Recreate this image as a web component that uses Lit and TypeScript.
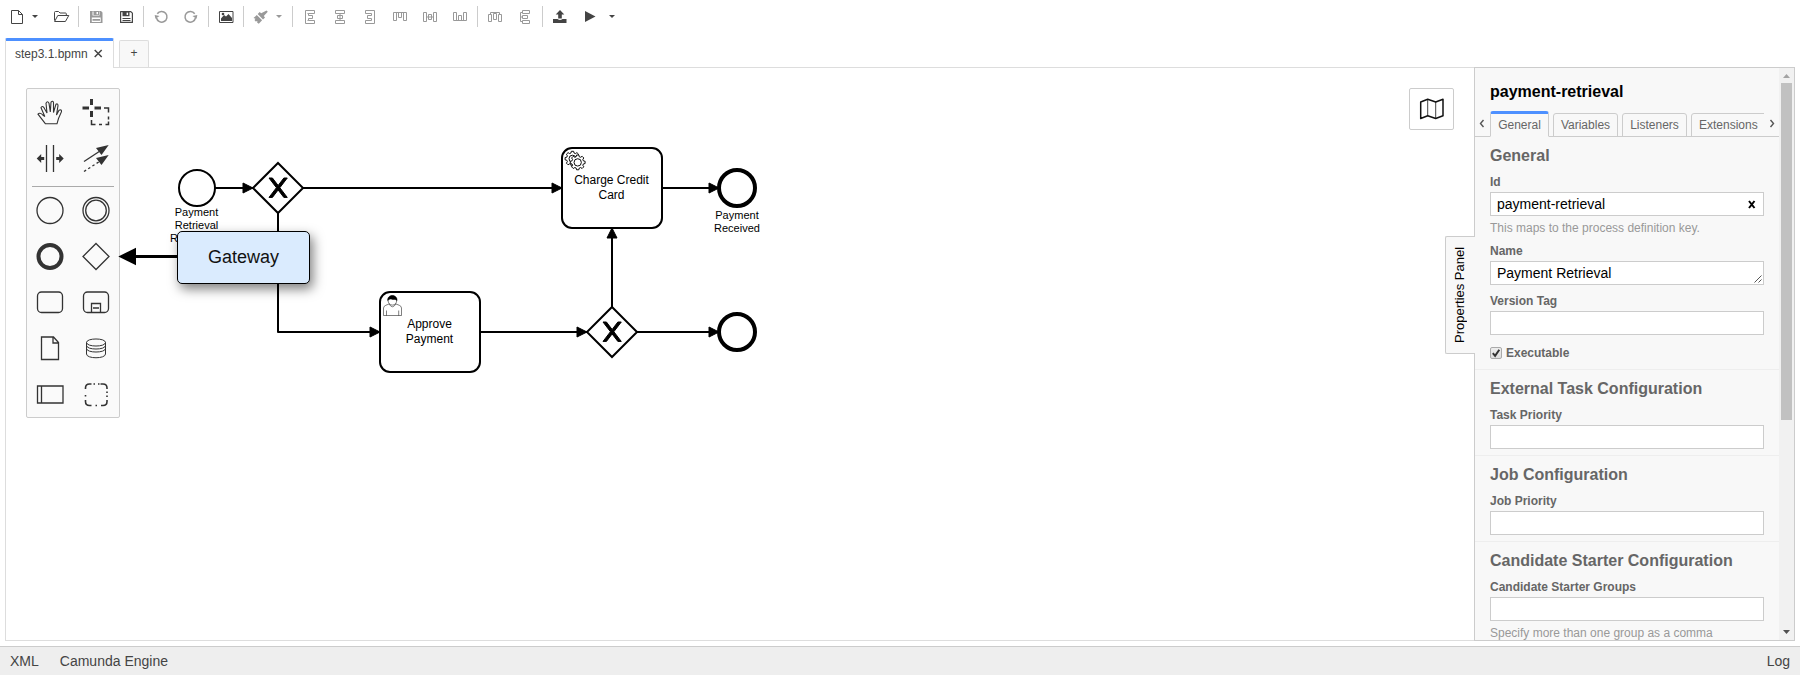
import { LitElement, html, svg, css, nothing } from "lit";
import { customElement, property } from "lit/decorators.js";

const ICONS: Record<string, any> = {
  file: svg`<path d="M9.500 10.500h7l4 4v9h-11z M16.500 10.500v4h4" class="l"/>`,
  open: svg`<path d="M8.500 20.500v-8q0-1 1-1h3l1.500 1.500h5.500q.8 0 .8.800v1.700M8.600 21.500l3.200-6h11l-3.400 6z" class="l"/>`,
  saved: svg`<path class="f" fill-rule="evenodd" d="M9 11h11l1.500 1.500V23H9z M11.500 11.500v4h7v-4z M10.800 17.500V22h8.900v-4.500z"/><path class="f" fill-rule="evenodd" d="M12.500 11h5.500v4h-5.500z M15.500 12v2.300h1.500v-2.300z M11.500 19h7.500v1.800h-7.500z"/>`,
  save: svg`<path class="l" d="M9.600 11.600h10.200l1.600 1.600v9.200H9.600z" style="stroke-width:1.2"/><path class="f" fill-rule="evenodd" d="M11.500 11.500h7v4.700h-7z M15.600 12.500v2.500h1.500v-2.500z M11.500 18h8v1h-8z M11.500 20h8v1h-8z"/>`,
  undo: svg`<path d="M11.300 13.800a5.300 5.300 0 1 1-.8 4.200" class="l w"/><path d="M8.500 15.500h5l-3.500 3.500z" transform="rotate(12 11 16)" class="f"/>`,
  redo: svg`<path d="M18.700 13.800a5.300 5.300 0 1 0 .8 4.200" class="l w"/><path d="M21.500 15.500h-5l3.500 3.500z" transform="rotate(-12 19 16)" class="f"/>`,
  image: svg`<path d="M8.500 11.500h13.500v11h-13.500z" class="l"/><path d="M10 21v-2.500l3-3.500 2 1.500 2.500-2.500 3.500 4v3z" class="f"/><circle cx="12" cy="14" r="1.300" class="f"/>`,
  brush: svg`<path class="f" d="M20.500 10.500l1.300 1.300-4 4.200 1.200 1.400-2 2-5.300-5.300 2-2 1.500 1.200z M10.800 15l5.300 5.300-3.300 3.500-1.700-1.200.3-1.500-1.700.4-1.200-1.500 1-1.200-2-.7z"/>`,
  left: svg`<path class="l" d="M10.500 10.500h9v3h-6v2h4v3h-4v2h6v3h-9z M13.500 13.500h-1M13.500 20.500h-1"/>`,
  center: svg`<path class="l" d="M10.500 10.500h9v3h-9z M10.500 20.500h9v3h-9z M12.500 15.500h5v3h-5z M15 13.500v7"/>`,
  right: svg`<path class="l" d="M19.500 10.500h-9v3h6v2h-4v3h4v2h-6v3h9z"/>`,
  top: svg`<path class="l" d="M8.500 12.500h13v8h-3v-8 M8.500 12.500v8h3v-8 M13.500 12.500v5h3v-5"/>`,
  middle: svg`<path class="l" d="M8.500 12.500h3v9h-3z M18.500 12.500h3v9h-3z M13.500 14.500h3v5h-3z M11.500 17h7"/>`,
  bottom: svg`<path class="l" d="M8.500 20.500h13v-8h-3v8 M8.500 20.500v-8h3v8 M13.500 20.500v-5h3v5"/>`,
  disth: svg`<path class="l" d="M8.500 14.500h3v7h-3z M18.500 14.500h3v7h-3z M13.500 13.500h3v6h-3z M10.500 14.500v-2h9v2"/>`,
  distv: svg`<path class="l" d="M12.500 10.500h7v3h-7z M12.500 20.500h7v3h-7z M12.500 15.500h5v3h-5z M12.500 12.500h-2v9h2 M10.500 17h2"/>`,
  upload: svg`<path class="f" d="M15 10l4.300 4.500h-2.500v4h-3.600v-4h-2.500z M8 19h4.500q2.500 2 5 0H21.500v4H8z"/>`,
  play: svg`<path class="f" d="M10 11l10.500 5.500L10 22z"/>`,
};

/** Toolbar groups; a trailing "-" marks a disabled action, "caret" a small menu arrow. */
const GROUPS = [
  ["file", "caret", "open"],
  ["saved-", "save"],
  ["undo-", "redo-"],
  ["image"],
  ["brush-", "caret-"],
  ["left-", "center-", "right-", "top-", "middle-", "bottom-"],
  ["disth-", "distv-"],
  ["upload", "play", "wide"],
];

@customElement("editor-toolbar")
class EditorToolbar extends LitElement {
  static styles = css`
    :host { display: flex; height: 34px; align-items: flex-start; }
    .group { display: flex; padding: 0 2px; border-right: 1px solid #ccc; height: 21px; margin-top: 6px; }
    .group:last-child { border: none; }
    svg { display: block; margin-top: -6px; color: #444; flex: none; }
    .off { color: #999; }
    .l { fill: none; stroke: currentColor; stroke-width: 1; stroke-linejoin: round; }
    .w { stroke-width: 1.5; }
    .f { fill: currentColor; }
  `;
  render() {
    return html`${GROUPS.map(
      (g) => html`<div class="group">${g.map((raw) => {
        const off = raw.endsWith("-");
        const name = raw.replace("-", "");
        if (name === "caret" || name === "wide")
          return html`<svg class=${off ? "off" : ""} width="14" height="34" viewBox=${name === "wide" ? "-4 0 14 34" : "0 0 14 34"}><path class="f" d="M0 15h6L3 18z"/></svg>`;
        return html`<svg class=${off ? "off" : ""} width="30" height="34" viewBox="0 0 30 34">${ICONS[name]}</svg>`;
      })}</div>`
    )}`;
  }
}

const PALETTE = [
  svg`<path d="M18.500 34.800 L11 25.200Q12.500 23.200 15.500 25.700L17.800 27.500 14 18.700Q15 16.200 17 18.700L20 24 19 14.200Q20.500 11.200 22 14.200L23.300 23 24 13.200Q26 11.200 26.500 13.700V23.500L29 15.200Q31 14.200 31 16.700L29.500 26 32 21.200Q34.800 20.200 34.500 22.700L31.500 29.500 30 34.800z" stroke-width="1.100"/>`,
  svg`<path d="M18.500 10v6M18.500 22v6M9.500 19h6.500M21.500 19h6.500" stroke-width="3"/><path d="M31 19h4.500v4.500M35.500 27.500v3M35.500 32.500v3h-3M29 35.500h-3M22.500 35.500h-4v-4.500" stroke-width="1.500"/>`,
  svg`<path d="M19.500 10v27M26.500 10v27"/><path class="s" d="M9.700 23.500l4.500-4.500v3h3v3h-3v3z M36.700 23.500l-4.500-4.500v3h-3v3h3v3z"/>`,
  svg`<path d="M11 26.500L27 16"/><path d="M11 36.500L28 25.500" stroke-dasharray="2.500 2.500"/><path class="s" d="M35.700 10l-7.200 10-5.500-7z M35.700 20l-7.200 10-5.500-7z"/>`,
  nothing,
  svg`<circle cx="23" cy="23.500" r="13"/>`,
  svg`<circle cx="23" cy="23.500" r="13"/><circle cx="23" cy="23.500" r="10.300"/>`,
  svg`<circle cx="23" cy="23.500" r="11.500" stroke-width="4"/>`,
  svg`<path d="M23 10.500l13 13-13 13-13-13z"/>`,
  svg`<rect x="10.500" y="13" width="25" height="20.500" rx="4"/>`,
  svg`<rect x="10.500" y="13" width="25" height="20.500" rx="4"/><path d="M18.500 33.500V24.500h9v9M20 29h6"/>`,
  svg`<path d="M14.500 12h12l5 5.500V34.500h-17z M26 12v6h5.500"/>`,
  svg`<path class="t" d="M13.500 17.500v11.500c0 5 19 5 19 0V17.500M13.500 17.500c0-4.700 19-4.700 19 0s-19 4.700-19 0M13.500 20.500c0 4.700 19 4.700 19 0M13.500 23.500c0 4.700 19 4.700 19 0"/>`,
  svg`<path d="M10.500 15h25.500v17H10.500z M14.500 15v17"/>`,
  svg`<path stroke-width="1.600" d="M12.500 18v-1q0-4 4-4h2M27.500 13h2.500q4 0 4 4v1M34 29v1.500q0 4-4 4h-2M18.500 34.500h-2q-4 0-4-4v-1.500M20.500 13h1.500M25 13h1.500M34 20.500v1.500M34 24.500v1.500M22.500 34.500h1.500M12.500 24v1.500"/>`,
];

@customElement("shape-palette")
class ShapePalette extends LitElement {
  static styles = css`
    :host { display: grid; grid-template-columns: 46px 46px; box-sizing: border-box; width: 94px;
      background: #fafafa; border: 1px solid #ccc; border-radius: 2px; }
    svg { display: block; fill: none; stroke: #333; stroke-width: 1.3; }
    .s { fill: #333; stroke: none; }
    .t { stroke-width: 1; }
    hr { grid-column: 1 / -1; margin: 5px 5px 0; border: 0; border-top: 1px solid #aaa; }
  `;
  render() {
    return PALETTE.map((p) => (p === nothing ? html`<hr />` : html`<svg width="46" height="46" viewBox="0 0 46 46">${p}</svg>`));
  }
}

const flow = (d: string) => svg`<path class="flow" d=${d} marker-end="url(#end)"/>`;
const lines = (x: number, y: number, step: number, cls: string, rows: string[]) =>
  rows.map((r, i) => svg`<text class=${cls} x=${x} y=${y + i * step}>${r}</text>`);
const gateway = (x: number, y: number) => svg`<g transform="translate(${x} ${y})">
  <path class="gw" d="M0-25L25 0 0 25-25 0z"/>
  <path class="cross" d="m-9-10 7.430 9.710-7.430 9.710h3.430l5.710-7.460 5.710 7.460h3.430l-7.430-9.710 7.430-9.710h-3.430l-5.710 7.460-5.710-7.460z"/></g>`;
const GEAR = "M-1.300-8.500h2.600l.5 2 1.500.6 1.800-1.100 1.900 1.900-1.100 1.800.6 1.500 2 .5v2.600l-2 .5-.6 1.500 1.100 1.800-1.900 1.900-1.800-1.100-1.500.6-.5 2h-2.600l-.5-2-1.500-.6-1.800 1.100-1.900-1.900 1.100-1.800-.6-1.500-2-.5v-2.600l2-.5.6-1.500-1.100-1.800 1.900-1.900 1.800 1.100 1.500-.6z";

@customElement("diagram-canvas")
class DiagramCanvas extends LitElement {
  static styles = css`
    :host { display: block; position: relative; overflow: hidden; background: #fff; }
    .board { display: block; }
    .flow { fill: none; stroke: #000; stroke-width: 2; stroke-linejoin: round; }
    .head { stroke: #000; stroke-width: 1; }
    .cross { stroke: #000; stroke-width: 1; }
    .shape, .gw { fill: #fff; stroke: #000; stroke-width: 2; }
    .end { fill: #fff; stroke: #000; stroke-width: 4; }
    .thin { fill: #fff; stroke: #000; stroke-width: 1.1; }
    .hair { fill: #fff; stroke: #000; stroke-width: 0.5; }
    text { text-anchor: middle; fill: #000; }
    .task { font-size: 12px; }
    .label { font-size: 11px; }
    shape-palette { position: absolute; left: 20px; top: 20px; }
    .map { position: absolute; right: 20px; top: 20px; width: 43px; height: 40px; border: 1px solid #ccc; border-radius: 2px; background: #fff; }
    .pointer { position: absolute; left: 112px; top: 179px; }
    .callout { position: absolute; left: 171px; top: 163px; width: 131px; height: 51px; border: 1px solid #000;
      border-radius: 5px; background: #daebfe; font-size: 18px; line-height: 51px; text-align: center; color: #111;
      box-shadow: 3px 5px 12px rgba(0, 0, 0, 0.5); }
  `;
  render() {
    return html`
      <svg class="board" width="1468" height="572" viewBox="6 68 1468 572">
        <defs><marker id="end" viewBox="0 0 20 20" refX="11" refY="10" markerWidth="10" markerHeight="10" orient="auto"><path class="head" d="M1 5L11 10 1 15z"/></marker></defs>
        ${flow("M215 188H253")}${flow("M303 188H562")}${flow("M662 188H719")}
        ${flow("M278 213V332H380")}${flow("M480 332H587")}${flow("M612 307V228")}${flow("M637 332H719")}
        <circle class="shape" cx="197" cy="188" r="18"/>
        <circle class="end" cx="737" cy="188" r="18"/>
        <circle class="end" cx="737" cy="332" r="18"/>
        ${gateway(278, 188)}${gateway(612, 332)}
        <rect class="shape" x="562" y="148" width="100" height="80" rx="10"/>
        <rect class="shape" x="380" y="292" width="100" height="80" rx="10"/>
        <g transform="translate(572.500 158.700) scale(.87)"><path class="thin" d=${GEAR}/><circle class="thin" r="4"/></g>
        <g transform="translate(577.700 162.400) scale(.87)"><path class="thin" d=${GEAR}/><circle class="thin" r="4.200"/></g>
        <g class="hair">
          <path d="M383.500 315.500v-7.500q.3-2 2.300-2.700l3.700-1.500h6l3.800 1.500q2 .7 2.200 2.700v7.500z"/>
          <path d="M389 303.800q3.300 6 7 0M386.500 315.500v-5M398.700 315.500v-5"/>
          <ellipse cx="392.400" cy="300.500" rx="4.300" ry="4.600"/>
          <path fill="#000" d="M387.700 300.500c-.5-6.700 9.800-6.700 9.300 0-2.300-2-3.500-.5-5-1.200-1.700-.6-2.800 0-4.300 1.200z"/>
        </g>
        ${lines(611.5, 184, 15, "task", ["Charge Credit", "Card"])}
        ${lines(429.5, 328, 15, "task", ["Approve", "Payment"])}
        ${lines(196.5, 216, 13, "label", ["Payment", "Retrieval", "Requested"])}
        ${lines(737, 219, 13, "label", ["Payment", "Received"])}
        <path d="M134 256.500H180" stroke="#000" stroke-width="3"/>
      </svg>
      <shape-palette></shape-palette>
      <svg class="pointer" width="20" height="20"><path d="M.3 9.500L18 .8v17.400z"/></svg>
      <div class="callout">Gateway</div>
      <div class="map"><svg width="43" height="40" fill="none" stroke="#111" stroke-width="1.500" stroke-linejoin="round"><path d="M10.700 13l7-2.700 8 2.700 7.300-2.700v16.500l-7.300 2.700-8-2.700-7 2.700z"/><path d="M17.700 10.500v16.500M25.700 13v16.500" stroke-width=".8"/></svg></div>
    `;
  }
}

@customElement("text-field")
class TextField extends LitElement {
  @property() label = "";
  @property() value = "";
  @property() hint = "";
  @property() kind = "";
  static styles = css`
    :host { display: block; }
    .label { font: bold 12px/14px "Liberation Sans", Arial, sans-serif; color: #666; margin-bottom: 3px; }
    .box { display: flex; justify-content: space-between; box-sizing: border-box; height: 24px; border: 1px solid #ccc; background: #fff;
      padding-left: 6px; font-size: 14px; line-height: 23px; color: #000; }
    .hint { margin-top: 5px; font-size: 12px; line-height: 14px; color: #999; white-space: nowrap; }
    svg { flex: none; }
  `;
  render() {
    return html`<div class="label">${this.label}</div>
      <div class="box"><span>${this.value}</span>${this.kind === "clear"
        ? html`<svg width="17" height="22"><path d="M3 8l5.500 7M8.500 8l-5.500 7" stroke="#000" stroke-width="2"/></svg>`
        : this.kind === "area"
        ? html`<svg width="10" height="22"><path d="M1.500 20.500l7-7M5.500 20.500l3-3" stroke="#555" stroke-width="1"/></svg>`
        : nothing}</div>
      ${this.hint ? html`<div class="hint">${this.hint}</div>` : nothing}`;
  }
}

@customElement("properties-panel")
class PropertiesPanel extends LitElement {
  static styles = css`
    :host { display: flex; position: relative; box-sizing: border-box; width: 321px; background: #f8f8f8; border: 1px solid #ccc; border-width: 0 1px 0 1px; }
    .handle { position: absolute; left: -30px; top: 168px; width: 29px; height: 116px; background: #f8f8f8;
      border: 1px solid #ccc; border-right: 0; border-radius: 2px 0 0 2px; writing-mode: vertical-rl; }
    .handle span { display: block; transform: rotate(180deg); font-size: 13px; line-height: 30px; text-align: center; height: 116px; width: 30px; color: #000; }
    .content { flex: 1; overflow: hidden; min-width: 0; height: 572px; }
    .title { font-size: 16px; font-weight: bold; line-height: 18px; padding: 15px 15px 9px; color: #000; }
    .tabs { display: flex; align-items: flex-end; height: 26px; border-bottom: 1px solid #ccc; }
    .nav { flex: none; width: 15px; height: 26px; }
    .clip { display: flex; flex: 1; gap: 4px; align-items: flex-end; overflow: hidden; margin-bottom: -1px; }
    .tab { flex: none; box-sizing: border-box; height: 24px; width: 65px; border: 1px solid #ccc; border-radius: 3px 3px 0 0;
      font-size: 12px; line-height: 23px; color: #666; text-align: center; }
    .tab.long { width: 76px; text-align: left; padding-left: 7px; }
    .tab.on { width: 59px; height: 26px; border-top: 3px solid #4d90ff; border-bottom-color: #f8f8f8; line-height: 23px; }
    .group { padding: 10px 15px 6px; border-bottom: 1px solid #eee; }
    h3 { margin: 0 0 10px; font-size: 16px; line-height: 18px; color: #666; }
    text-field + text-field { margin-top: 9px; }
    .check { display: flex; gap: 4px; margin-top: 10px; height: 18px; font-weight: bold; font-size: 12px; line-height: 16px; color: #666; }
    .check svg { margin-top: 1px; }
    .bar { width: 15px; flex: none; background: #f1f1f1; display: flex; flex-direction: column; align-items: center; }
    .thumb { width: 11px; height: 337px; background: #c1c1c1; margin-bottom: auto; }
  `;
  render() {
    return html`
      <div class="handle"><span>Properties Panel</span></div>
      <div class="content">
        <div class="title">payment-retrieval</div>
        <div class="tabs">
          <svg class="nav"><path d="M8.500 10l-3 3.500 3 3.500" fill="none" stroke="#555" stroke-width="1.400"/></svg>
          <div class="clip">
            <div class="tab on">General</div><div class="tab">Variables</div><div class="tab">Listeners</div><div class="tab long">Extensions</div>
          </div>
          <svg class="nav"><path d="M6.500 10l3 3.500-3 3.500" fill="none" stroke="#555" stroke-width="1.400"/></svg>
        </div>
        <div class="group">
          <h3>General</h3>
          <text-field label="Id" value="payment-retrieval" kind="clear" hint="This maps to the process definition key."></text-field>
          <text-field label="Name" value="Payment Retrieval" kind="area"></text-field>
          <text-field label="Version Tag"></text-field>
          <div class="check"><svg width="12" height="14"><defs><linearGradient id="g" x2="0" y2="1"><stop stop-color="#eee"/><stop offset="1" stop-color="#ddd"/></linearGradient></defs><rect x=".5" y="1.500" width="11" height="11" rx="1.500" fill="url(#g)" stroke="#aaa"/><path d="M2.800 7.200l2.300 2.600 4.200-6" fill="none" stroke="#333" stroke-width="2"/></svg>Executable</div>
        </div>
        <div class="group"><h3>External Task Configuration</h3><text-field label="Task Priority"></text-field></div>
        <div class="group"><h3>Job Configuration</h3><text-field label="Job Priority"></text-field></div>
        <div class="group"><h3>Candidate Starter Configuration</h3><text-field label="Candidate Starter Groups" hint="Specify more than one group as a comma"></text-field></div>
      </div>
      <div class="bar">
        <svg width="15" height="15"><path d="M4 10h7L7.500 6z" fill="#a3a3a3"/></svg>
        <div class="thumb"></div>
        <svg width="15" height="15"><path d="M4 5h7L7.500 9z" fill="#505050"/></svg>
      </div>
    `;
  }
}

@customElement("app-root")
class AppRoot extends LitElement {
  static styles = css`
    :host { display: flex; flex-direction: column; width: 1800px; height: 675px; background: #fff; overflow: hidden;
      font-family: "Liberation Sans", Arial, sans-serif; font-size: 12px; color: #444; }
    .tabs { display: flex; align-items: flex-end; gap: 5px; height: 33px; padding-left: 5px; }
    .tab { display: flex; align-items: center; gap: 6px; box-sizing: border-box; width: 109px; height: 30px; border: 1px solid #ddd; border-bottom: 0;
      border-top: 3px solid #4d90ff; border-radius: 2px 2px 0 0; padding: 0 0 2px 9px; background: #fff; position: relative; margin-bottom: -1px; z-index: 1; }
    .add { box-sizing: border-box; width: 30px; height: 27px; border: 1px solid #ddd; border-bottom: 0; border-radius: 2px 2px 0 0; background: #f8f8f8; text-align: center; line-height: 25px; }
    .work { display: flex; box-sizing: border-box; height: 574px; margin: 0 5px; border: 1px solid #ddd; border-right: 0; }
    diagram-canvas { flex: 1; }
    properties-panel { box-shadow: 0 -1px #ccc, 0 1px #ccc; }
    footer { display: flex; gap: 21px; box-sizing: border-box; height: 29px; margin-top: 5px; border-top: 1px solid #ccc; background: #eee; padding: 0 10px; font-size: 14px; line-height: 29px; }
    .log { margin-left: auto; }
  `;
  render() {
    return html`
      <editor-toolbar></editor-toolbar>
      <div class="tabs">
        <div class="tab"><span>step3.1.bpmn</span><svg width="9" height="9"><path d="M.7 1l7 7M7.700 1l-7 7" stroke="#444" stroke-width="1.500"/></svg></div>
        <div class="add">+</div>
      </div>
      <div class="work">
        <diagram-canvas></diagram-canvas>
        <properties-panel></properties-panel>
      </div>
      <footer><span>XML</span><span>Camunda Engine</span><span class="log">Log</span></footer>
    `;
  }
}
